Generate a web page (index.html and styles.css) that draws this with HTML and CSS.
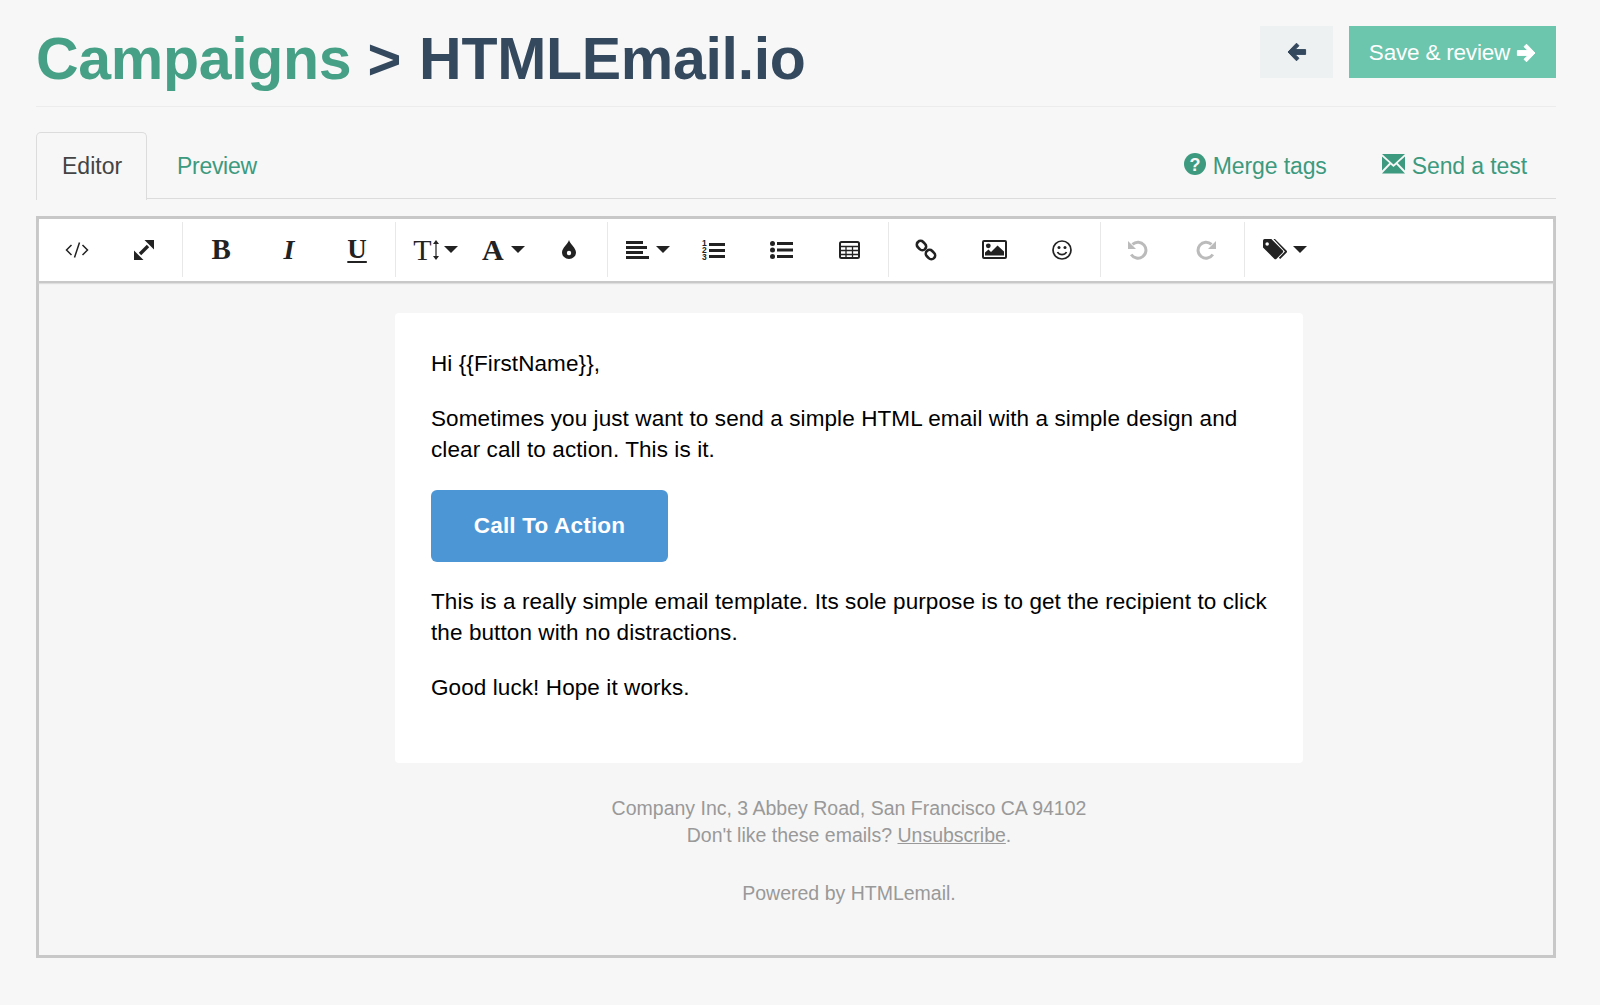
FILE: index.html
```html
<!DOCTYPE html>
<html lang="en">
<head>
<meta charset="utf-8">
<title>Campaigns > HTMLEmail.io</title>
<link rel="stylesheet" href="styles.css">
</head>
<body>
<div class="page">
  <header class="top">
    <h1 class="title"><a class="crumb">Campaigns</a> <span class="gt">&gt;</span> HTMLEmail.io</h1>
    <div class="actions">
      <a class="btn btn-back"><svg class="i-arrow" viewBox="0 0 20 20"><path d="M1 10 9.500 1.200 12 3.700 8 7.600H18.600V12.400H8L12 16.300 9.500 18.800Z" fill="#34495e" stroke="#34495e" stroke-width="1" stroke-linejoin="round"/></svg></a>
      <a class="btn btn-save">Save &amp; review <svg class="i-arrow-r" viewBox="0 0 20 20"><path d="M19 10 10.500 1.200 8 3.700 12 7.600H1.400V12.400H12L8 16.300 10.500 18.800Z" fill="#fff" stroke="#fff" stroke-width="1" stroke-linejoin="round"/></svg></a>
    </div>
  </header>

  <nav class="tabs">
    <a class="tab tab-active">Editor</a>
    <a class="tab tab-next">Preview</a>
    <div class="tab-links">
      <a class="tab-link"><svg class="i-help" viewBox="0 0 22 22"><circle cx="11" cy="11" r="11" fill="#3d9a7e"/><text x="11" y="17.500" text-anchor="middle" class="help-mark">?</text></svg>Merge tags</a>
      <a class="tab-link"><svg class="i-mail" viewBox="0 0 23 20"><path d="M0 0H23L11.500 10.500Z M0 2.500 7.300 9 0 16.500Z M23 2.500 15.700 9 23 16.500Z M0 19.500 8.600 10.500 11.500 13 14.400 10.500 23 19.500Z" fill="#3d9a7e"/></svg>Send a test</a>
    </div>
  </nav>

  <section class="editor">
    <div class="toolbar">
      <div class="group">
        <a class="tool"><svg class="ic" width="24" height="16" viewBox="0 0 24 16" fill="none" stroke="#222" stroke-width="1.500"><path d="M6.500 3 1.500 8 6.500 13M17.500 3 22.500 8 17.500 13M14.500 0.500 9.500 15.500"/></svg></a>
        <a class="tool tool-nudge-l"><svg class="ic" width="20" height="20" viewBox="0 0 20 20" fill="#222"><path d="M10.500 0H20V9.500ZM0 10.500V20H9.500Z"/><path d="M6 14 14 6" stroke="#222" stroke-width="3.400"/></svg></a>
      </div>
      <div class="group">
        <a class="tool glyph g-bold">B</a>
        <a class="tool glyph g-italic">I</a>
        <a class="tool glyph g-under">U</a>
      </div>
      <div class="group">
        <a class="tool tool-nudge glyph g-size">T<svg class="i-updown" width="6" height="20" viewBox="0 0 6 20" fill="#222"><path d="M3 0 6 4H3.600V16H6L3 20 0 16H2.400V4H0Z"/></svg><i class="caret"></i></a>
        <a class="tool tool-nudge glyph g-size g-a">A<i class="caret caret-a"></i></a>
        <a class="tool"><svg class="ic" width="14" height="19" viewBox="0 0 14 19"><path d="M7 0C8 4 14 8 14 12.500A7 6.500 0 0 1 0 12.500C0 8 6 4 7 0Z" fill="#222"/><circle cx="7" cy="13" r="2.200" fill="#fff"/></svg></a>
      </div>
      <div class="group">
        <a class="tool tool-nudge"><svg class="ic" width="23" height="18" viewBox="0 0 23 18" fill="#222"><path d="M0 0H17V3H0ZM0 5H21V8H0ZM0 10H17V13H0ZM0 15H23V18H0Z"/></svg><i class="caret caret-wide"></i></a>
        <a class="tool"><svg class="ic ic-open" width="23" height="20" viewBox="0 0 23 20" fill="#222"><path d="M7 3H23V6H7ZM7 9H23V12H7ZM7 15H23V18H7Z"/><text x="0" y="6" class="num">1</text><text x="0" y="13" class="num">2</text><text x="0" y="20" class="num">3</text></svg></a>
        <a class="tool"><svg class="ic" width="23" height="18" viewBox="0 0 23 18" fill="#222"><circle cx="2.500" cy="2.500" r="2.500"/><circle cx="2.500" cy="9" r="2.500"/><circle cx="2.500" cy="15.500" r="2.500"/><path d="M7 1H23V4H7ZM7 7.500H23V10.500H7ZM7 14H23V17H7Z"/></svg></a>
        <a class="tool"><svg class="ic" width="21" height="18" viewBox="0 0 21 18" fill="none" stroke="#222"><rect x="1" y="1" width="19" height="16" rx="1.500" stroke-width="2"/><path d="M1 5.500H20M1 9.500H20M1 13.500H20M7 5V17M13.500 5V17" stroke-width="1.300"/></svg></a>
      </div>
      <div class="group">
        <a class="tool"><svg class="ic" width="22" height="22" viewBox="0 0 22 22" fill="none" stroke="#222" stroke-width="2.600"><rect x="1.500" y="2.800" width="10" height="7.500" rx="3.700" transform="rotate(45 6.500 6.500)"/><rect x="10.500" y="11.800" width="10" height="7.500" rx="3.700" transform="rotate(45 15.500 15.500)"/></svg></a>
        <a class="tool"><svg class="ic" width="25" height="19" viewBox="0 0 25 19"><rect x="1" y="1" width="23" height="17" rx="1" fill="#fff" stroke="#222" stroke-width="2"/><circle cx="6.300" cy="5.800" r="2.400" fill="#222"/><path d="M3 15.500V12.500L6.500 9.500 9 12 15.500 5.500 22 11.500V15.500Z" fill="#222"/></svg></a>
        <a class="tool"><svg class="ic" width="20" height="20" viewBox="0 0 20 20" fill="none" stroke="#222" stroke-width="1.700"><circle cx="10" cy="10" r="9"/><path d="M5.500 12C7 15.500 13 15.500 14.500 12"/><circle cx="7" cy="7.500" r="1.500" fill="#222" stroke="none"/><circle cx="13" cy="7.500" r="1.500" fill="#222" stroke="none"/></svg></a>
      </div>
      <div class="group">
        <a class="tool tool-nudge-l"><svg class="ic" width="20" height="20" viewBox="0 0 20 20" fill="none" stroke="#bbb" stroke-width="3"><path d="M4.500 4.300A8 8 0 1 1 3.200 14.500"/><path d="M0 1V9H8Z" fill="#bbb" stroke="none"/></svg></a>
        <a class="tool tool-nudge-l"><svg class="ic" width="20" height="20" viewBox="0 0 20 20" fill="none" stroke="#bbb" stroke-width="3"><path d="M15.500 4.300A8 8 0 1 0 16.800 14.500"/><path d="M20 1V9H12Z" fill="#bbb" stroke="none"/></svg></a>
      </div>
      <div class="group group-last">
        <a class="tool tool-nudge"><svg class="ic" width="25" height="21" viewBox="0 0 24 20" fill="#222"><path d="M0 1.500A1.500 1.500 0 0 1 1.500 0H8L18.800 10.800A1.500 1.500 0 0 1 18.800 13L13 18.800A1.500 1.500 0 0 1 10.800 18.800L0 8ZM4 3A1.700 1.700 0 1 0 4 6.400 1.700 1.700 0 0 0 4 3Z" fill-rule="evenodd"/><path d="M11.500 0 22.500 11A1.500 1.500 0 0 1 22.500 13.200L16.500 19.200 15.200 18 21 12 10 0Z"/></svg><i class="caret"></i></a>
      </div>
    </div>

    <div class="canvas">
      <article class="mail">
        <p>Hi {{FirstName}},</p>
        <p>Sometimes you just want to send a simple HTML email with a simple design and clear call to action. This is it.</p>
        <a class="cta">Call To Action</a>
        <p>This is a really simple email template. Its sole purpose is to get the recipient to click the button with no distractions.</p>
        <p>Good luck! Hope it works.</p>
      </article>
      <footer class="mail-foot">
        <p>Company Inc, 3 Abbey Road, San Francisco CA 94102<br>Don't like these emails? <u>Unsubscribe</u>.</p>
        <p>Powered by HTMLemail.</p>
      </footer>
    </div>
  </section>
</div>
</body>
</html>
```
FILE: styles.css
```css
* { box-sizing: border-box; }
html, body { margin: 0; }
body {
  background: #f7f7f7;
  font-family: "Liberation Sans", Arial, sans-serif;
  color: #000;
}
.page { width: 1600px; height: 1005px; padding: 26px 44px 0 36px; overflow: hidden; }

.top {
  display: flex;
  justify-content: space-between;
  align-items: flex-start;
  height: 81px;
  border-bottom: 1px solid #ececec;
}
.title {
  margin: 0;
  font-size: 59px;
  line-height: 66px;
  font-weight: 700;
  color: #34495e;
  letter-spacing: -0.3px;
}
.crumb { color: #45a085; }
.gt { font-size: 58px; margin-right: 2px; }
.actions { display: flex; gap: 16px; }
.btn {
  height: 52px;
  display: flex;
  align-items: center;
  justify-content: center;
  font-size: 22.500px;
  letter-spacing: -0.2px;
}
.btn-back { width: 73px; background: #eef1f2; }
.btn-save { width: 207px; padding-top: 1px; background: #6cc5ad; color: #fff; white-space: pre; }
.i-arrow, .i-arrow-r { width: 20px; height: 20px; display: block; }

.tabs {
  display: flex;
  align-items: flex-start;
  height: 92px;
  padding-top: 25px;
  border-bottom: 1.500px solid #dcdcdc;
}
.tab {
  font-size: 23px;
  letter-spacing: -0.3px;
  padding: 21px 25px 0;
  color: #3d9a7e;
  height: 66px;
}
.tab-active {
  color: #444;
  letter-spacing: 0;
  border: 1.500px solid #dcdcdc;
  border-bottom: 0;
  border-radius: 5px 5px 0 0;
  background: #f7f7f7;
  width: 111px;
  height: 68px;
  padding-top: 20px;
  padding-left: 25px;
  position: relative;
}
.tab-next { margin-left: 5px; }
.tab-links { margin-left: auto; display: flex; gap: 55px; padding: 21px 29px 0 0; }
.tab-link { display: flex; align-items: flex-start; color: #3d9a7e; font-size: 23px; letter-spacing: -0.1px; }
.i-help { width: 22px; height: 22px; margin: 0 7px 0 0; }
.help-mark { font: 700 18px "Liberation Sans", sans-serif; fill: #f7f7f7; }
.i-mail { width: 23px; height: 20px; margin: 1px 7px 0 0; }

.editor {
  margin-top: 17px;
  height: 742px;
  border: 3px solid #c8c8c8;
  background: #f6f6f6;
}
.toolbar {
  display: flex;
  height: 62px;
  background: #fff;
  padding-top: 3px;
  box-shadow: 0 2px 0 #c8c8c8, 0 3px 1px #dedede;
}
.group {
  display: flex;
  height: 55px;
  padding: 0 3.700px;
  border-right: 1px solid #e8e8e8;
  box-sizing: content-box;
}
.group-last { border-right: 0; }
.tool {
  width: 68px;
  display: flex;
  align-items: center;
  justify-content: center;
  color: #222;
}
.tool-nudge { padding-left: 4px; }
.tool-nudge-l { padding-right: 2px; }
.ic { display: block; }
.ic-open { overflow: visible; }
.glyph { font-family: "Liberation Serif", "Times New Roman", serif; }
.g-bold { font-size: 29px; font-weight: 700; }
.g-italic { font-size: 28px; font-weight: 700; font-style: italic; }
.g-under { font-size: 27px; font-weight: 700; text-decoration: underline; text-underline-offset: 3px; }
.g-size { font-size: 30px; line-height: 1; }
.g-a { font-weight: 700; }
.i-updown { margin-left: 1px; }
.caret {
  width: 0;
  height: 0;
  margin-left: 5px;
  border-left: 7px solid transparent;
  border-right: 7px solid transparent;
  border-top: 7px solid #222;
}
.caret-a { margin-left: 7px; }
.caret-wide { margin-left: 7px; }
.num { font: 700 8.500px "Liberation Sans", sans-serif; }

.canvas { padding: 32px 0 0 106px; display: flex; flex-direction: column; align-items: center; }
.mail {
  width: 908px;
  height: 450px;
  padding: 35px 30px 0 36px;
  background: #fff;
  border-radius: 4px;
  font-size: 22.500px;
  line-height: 31px;
  letter-spacing: 0.09px;
}
.mail p { margin: 0 0 24px; }
.cta {
  display: block;
  width: 237px;
  height: 72px;
  margin: 25px 0 24px;
  background: #4d96d6;
  border-radius: 6px;
  color: #fff;
  font-size: 22.500px;
  font-weight: 700;
  letter-spacing: 0.2px;
  line-height: 72px;
  text-align: center;
}
.mail-foot {
  padding-top: 32px;
  font-size: 19.500px;
  line-height: 26.500px;
  text-align: center;
  color: #999;
}
.mail-foot p { margin: 0 0 32px; }
```
